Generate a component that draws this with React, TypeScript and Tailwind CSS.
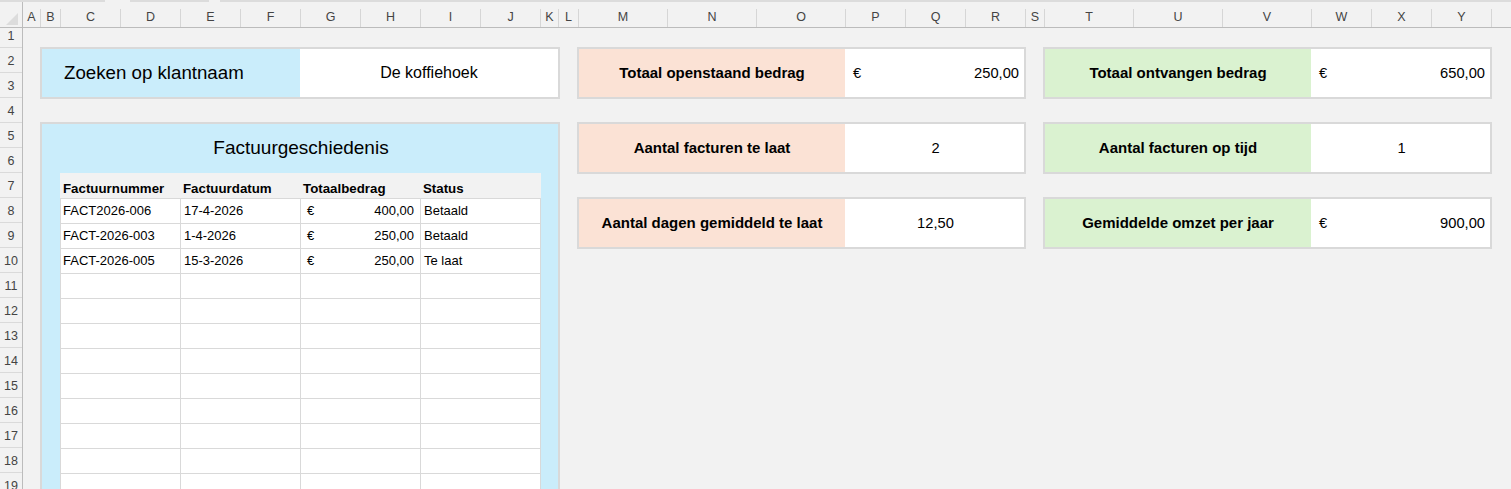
import React from "react";

const cols: { l: string; w: number }[] = [
  { l: "A", w: 18 },
  { l: "B", w: 20 },
  { l: "C", w: 60 },
  { l: "D", w: 60 },
  { l: "E", w: 60 },
  { l: "F", w: 60 },
  { l: "G", w: 60 },
  { l: "H", w: 60 },
  { l: "I", w: 60 },
  { l: "J", w: 60 },
  { l: "K", w: 18 },
  { l: "L", w: 20 },
  { l: "M", w: 89 },
  { l: "N", w: 89 },
  { l: "O", w: 89 },
  { l: "P", w: 60 },
  { l: "Q", w: 60 },
  { l: "R", w: 60 },
  { l: "S", w: 19 },
  { l: "T", w: 89 },
  { l: "U", w: 89 },
  { l: "V", w: 89 },
  { l: "W", w: 60 },
  { l: "X", w: 60 },
  { l: "Y", w: 60 },
];

const invoices = [
  { nr: "FACT2026-006", date: "17-4-2026", amount: "400,00", status: "Betaald" },
  { nr: "FACT-2026-003", date: "1-4-2026", amount: "250,00", status: "Betaald" },
  { nr: "FACT-2026-005", date: "15-3-2026", amount: "250,00", status: "Te laat" },
];

const rowNums = Array.from({ length: 19 }, (_, i) => i + 1);

function Card({
  label,
  tone,
  euro,
  value,
}: {
  label: string;
  tone: "peach" | "green";
  euro?: boolean;
  value: string;
}) {
  return (
    <div className="flex h-[52px] border-2 border-[#d9d9d9]">
      <div
        className={
          "flex w-[266px] items-center justify-center text-[15px] font-bold text-black " +
          (tone === "peach" ? "bg-[#fbe2d5]" : "bg-[#daf2d0]")
        }
      >
        {label}
      </div>
      {euro ? (
        <div className="flex flex-1 items-center justify-between bg-white pl-[8px] pr-[5px] text-[14.7px] text-black">
          <span>€</span>
          <span>{value}</span>
        </div>
      ) : (
        <div className="flex flex-1 items-center justify-center bg-white pl-[2px] text-[14.7px] text-black">
          {value}
        </div>
      )}
    </div>
  );
}

export default function App() {
  return (
    <div className="h-[489px] w-[1511px] overflow-hidden bg-[#f2f2f2] font-['Liberation_Sans',Arial,sans-serif]">
      {/* top strip */}
      <div className="flex h-[2px]">
        <div className="w-[105px] bg-[#dcdcdc]" />
        <div className="w-[25px]" />
        <div className="w-[79px] bg-[#dcdcdc]" />
        <div className="w-[11px]" />
        <div className="flex-1 bg-[#dcdcdc]" />
      </div>

      {/* column headers */}
      <div className="flex h-[26px] items-end border-b border-[#bcbcbc]">
        <div className="relative h-full w-[23px] border-r border-[#bcbcbc]">
          <svg className="absolute left-0 top-0" width="23" height="26" viewBox="0 0 23 26">
            <polygon points="18,11 18,23 6,23" fill="#dcdcdc" />
          </svg>
        </div>
        {cols.map((c) => (
          <div
            key={c.l}
            className="flex h-[18px] shrink-0 items-center justify-center border-r border-[#d6d6d6] pb-[2px] text-[12.5px] text-[#444]"
            style={{ width: c.w }}
          >
            {c.l}
          </div>
        ))}
        <div className="h-[18px] flex-1" />
      </div>

      <div className="flex">
        {/* row headers */}
        <div className="w-[23px] shrink-0 border-r border-[#bcbcbc]">
          {rowNums.map((n) => (
            <div
              key={n}
              className={
                "flex items-end justify-center border-b border-[#dadada] pb-[1px] text-[12.5px] text-[#444] " +
                (n === 1 ? "h-[20px]" : "h-[25px]")
              }
            >
              {n}
            </div>
          ))}
        </div>

        {/* sheet content */}
        <div className="flex gap-[17px] pl-[17px] pt-[19px]">
          {/* left column */}
          <div className="flex w-[520px] flex-col gap-[23px]">
            <div className="flex h-[52px] border-2 border-[#d9d9d9]">
              <div className="flex w-[258px] items-center bg-[#caedfb] pl-[22px] text-[18.7px] text-black">
                Zoeken op klantnaam
              </div>
              <div className="flex flex-1 items-center justify-center bg-white text-[16px] text-black">
                De koffiehoek
              </div>
            </div>

            <div className="h-[420px] border-2 border-b-0 border-[#d9d9d9] bg-[#caedfb]">
              <div className="flex h-[49px] items-center justify-center pl-[2px] text-[19px] text-black">
                Factuurgeschiedenis
              </div>
              <div className="ml-[18px] w-[481px]">
                <div className="flex h-[25px] bg-[#f2f2f2]">
                  {["Factuurnummer", "Factuurdatum", "Totaalbedrag", "Status"].map((h) => (
                    <div
                      key={h}
                      className="flex w-[120px] items-end pb-[3px] pl-[3px] text-[13.3px] font-bold leading-none text-black"
                    >
                      {h}
                    </div>
                  ))}
                </div>
                <div className="border-l border-[#d9d9d9] bg-white">
                  {Array.from({ length: 12 }, (_, r) => {
                    const inv = invoices[r];
                    return (
                      <div key={r} className="flex h-[25px] border-t border-[#d9d9d9]">
                        <div className="flex w-[120px] items-center border-r border-[#d9d9d9] pl-[2px] text-[13px] text-black">
                          {inv?.nr}
                        </div>
                        <div className="flex w-[120px] items-center border-r border-[#d9d9d9] pl-[3px] text-[13px] text-black">
                          {inv?.date}
                        </div>
                        <div className="flex w-[120px] items-center justify-between border-r border-[#d9d9d9] pl-[6px] pr-[6px] text-[13px] text-black">
                          {inv && (
                            <>
                              <span>€</span>
                              <span>{inv.amount}</span>
                            </>
                          )}
                        </div>
                        <div className="flex w-[120px] items-center border-r border-[#d9d9d9] pl-[3px] text-[13px] text-black">
                          {inv?.status}
                        </div>
                      </div>
                    );
                  })}
                </div>
              </div>
            </div>
          </div>

          {/* middle column */}
          <div className="flex w-[449px] flex-col gap-[23px]">
            <Card label="Totaal openstaand bedrag" tone="peach" euro value="250,00" />
            <Card label="Aantal facturen te laat" tone="peach" value="2" />
            <Card label="Aantal dagen gemiddeld te laat" tone="peach" value="12,50" />
          </div>

          {/* right column */}
          <div className="flex w-[449px] flex-col gap-[23px]">
            <Card label="Totaal ontvangen bedrag" tone="green" euro value="650,00" />
            <Card label="Aantal facturen op tijd" tone="green" value="1" />
            <Card label="Gemiddelde omzet per jaar" tone="green" euro value="900,00" />
          </div>
        </div>
      </div>
    </div>
  );
}
